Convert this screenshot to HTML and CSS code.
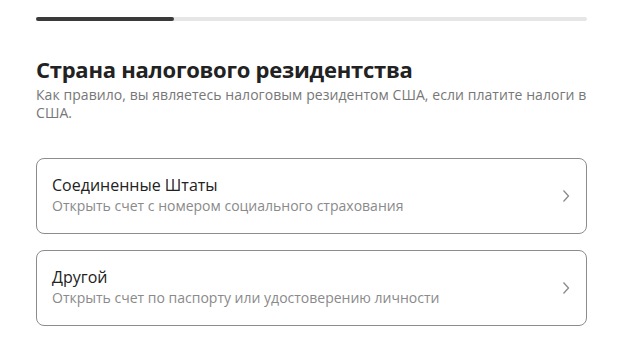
FILE: index.html
```html
<!DOCTYPE html>
<html lang="ru">
<head>
    <meta charset="UTF-8">
    <meta name="viewport" content="width=device-width, initial-scale=1.0">
    <title>Страна налогового резидентства</title>
    <link rel="stylesheet" href="styles.css">
</head>
<body>

<div class="page">
    <div class="progress">
        <div class="progress-fill"></div>
    </div>

    <h1 class="title">Страна налогового резидентства</h1>
    <p class="lead">Как правило, вы являетесь налоговым резидентом США, если платите налоги в США.</p>

    <div class="options">
        <a class="option" href="#">
            <div class="option-text">
                <div class="option-name">Соединенные Штаты</div>
                <div class="option-desc">Открыть счет с номером социального страхования</div>
            </div>
            <svg class="chevron" width="8" height="14" viewBox="0 0 8 14">
                <path d="M1.5 1.5 L6.5 7 L1.5 12.5" fill="none" stroke="#8a8a8a" stroke-width="1.3"/>
            </svg>
        </a>

        <a class="option" href="#">
            <div class="option-text">
                <div class="option-name">Другой</div>
                <div class="option-desc">Открыть счет по паспорту или удостоверению личности</div>
            </div>
            <svg class="chevron" width="8" height="14" viewBox="0 0 8 14">
                <path d="M1.5 1.5 L6.5 7 L1.5 12.5" fill="none" stroke="#8a8a8a" stroke-width="1.3"/>
            </svg>
        </a>
    </div>
</div>

</body>
</html>
```

FILE: styles.css
```css
body {
    font-family: 'Open Sans', 'Noto Sans', sans-serif;
    background-color: #fff;
    margin: 0;
    padding: 0;
    color: #222;
}

.page {
    padding: 17px 35px 0 36px;
}

.progress {
    height: 4px;
    background-color: #e6e6e6;
    border-radius: 2px;
}

.progress-fill {
    width: 138px;
    height: 100%;
    background-color: #3a3a3a;
    border-radius: 2px;
}

.title {
    margin: 34px 0 0;
    font-size: 22px;
    line-height: 28px;
    font-weight: 700;
    letter-spacing: -0.25px;
    color: #222;
}

.lead {
    margin: 3px 0 0;
    font-size: 14px;
    line-height: 18px;
    letter-spacing: 0.06px;
    color: #777;
}

.options {
    margin-top: 36px;
    display: flex;
    flex-direction: column;
    gap: 16px;
}

.option {
    display: flex;
    align-items: center;
    justify-content: space-between;
    height: 76px;
    box-sizing: border-box;
    padding: 0 16px 3px 15px;
    border: 1px solid #8c8c8c;
    border-radius: 8px;
    text-decoration: none;
}

.option-name {
    font-size: 16px;
    line-height: 22px;
    color: #222;
}

.option-desc {
    font-size: 14px;
    line-height: 20px;
    color: #8a8a8a;
}

.chevron {
    flex-shrink: 0;
    margin-top: 3px;
}
```
